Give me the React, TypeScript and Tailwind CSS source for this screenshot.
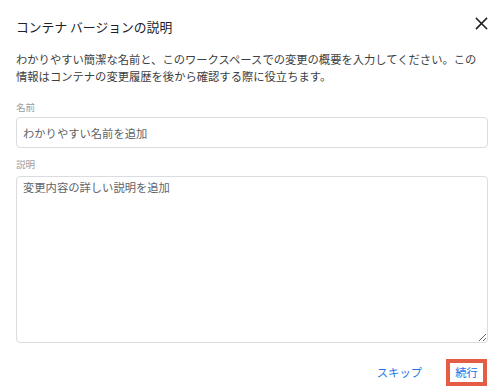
import React from "react";

export default function App() {
  const font = { fontFamily: '"Noto Sans CJK JP", "Noto Sans", sans-serif' };
  return (
    <div className="w-[504px] h-[392px] bg-white flex flex-col px-4 relative" style={font}>
      <div className="mt-[17px] flex items-center justify-between h-5">
        <div className="text-[12.8px] leading-5 text-[#202124]">コンテナ バージョンの説明</div>
        <svg width="13" height="13" viewBox="0 0 13 13" className="mr-[0px] -mt-2">
          <path d="M1.5 1.5 L11.5 11.5 M11.5 1.5 L1.5 11.5" stroke="#202124" strokeWidth="1.6" strokeLinecap="square" />
        </svg>
      </div>
      <p className="mt-[14px] text-[11.3px] leading-[17px] text-[#3c4043]">
        わかりやすい簡潔な名前と、このワークスペースでの変更の概要を入力してください。この
        <br />
        情報はコンテナの変更履歴を後から確認する際に役立ちます。
      </p>
      <div className="mt-[16px] text-[9.6px] leading-3 text-[#9aa0a6]">名前</div>
      <input
        className="mt-1 h-[31px] w-full border border-[#dadce0] rounded-[4px] px-[6px] text-[11.3px] text-[#3c4043] placeholder:text-[#5f6368] outline-none"
        placeholder="わかりやすい名前を追加"
        style={font}
      />
      <div className="mt-[10px] text-[9.6px] leading-3 text-[#9aa0a6]">説明</div>
      <textarea
        className="mt-[6px] h-[167px] w-full border border-[#dadce0] rounded-[4px] px-[6px] pt-[2px] text-[11.3px] leading-[17px] text-[#3c4043] placeholder:text-[#5f6368] outline-none resize-y"
        placeholder="変更内容の詳しい説明を追加"
        style={font}
      />
      <div className="mt-[16px] flex items-center justify-end gap-[24px] pr-[1px]">
        <button className="text-[11.3px] text-[#1a73e8]" style={font}>スキップ</button>
        <button className="h-[27px] w-[41px] border-4 border-[#e45c45] text-[11.3px] text-[#1a73e8] flex items-center justify-center" style={font}>続行</button>
      </div>
    </div>
  );
}
